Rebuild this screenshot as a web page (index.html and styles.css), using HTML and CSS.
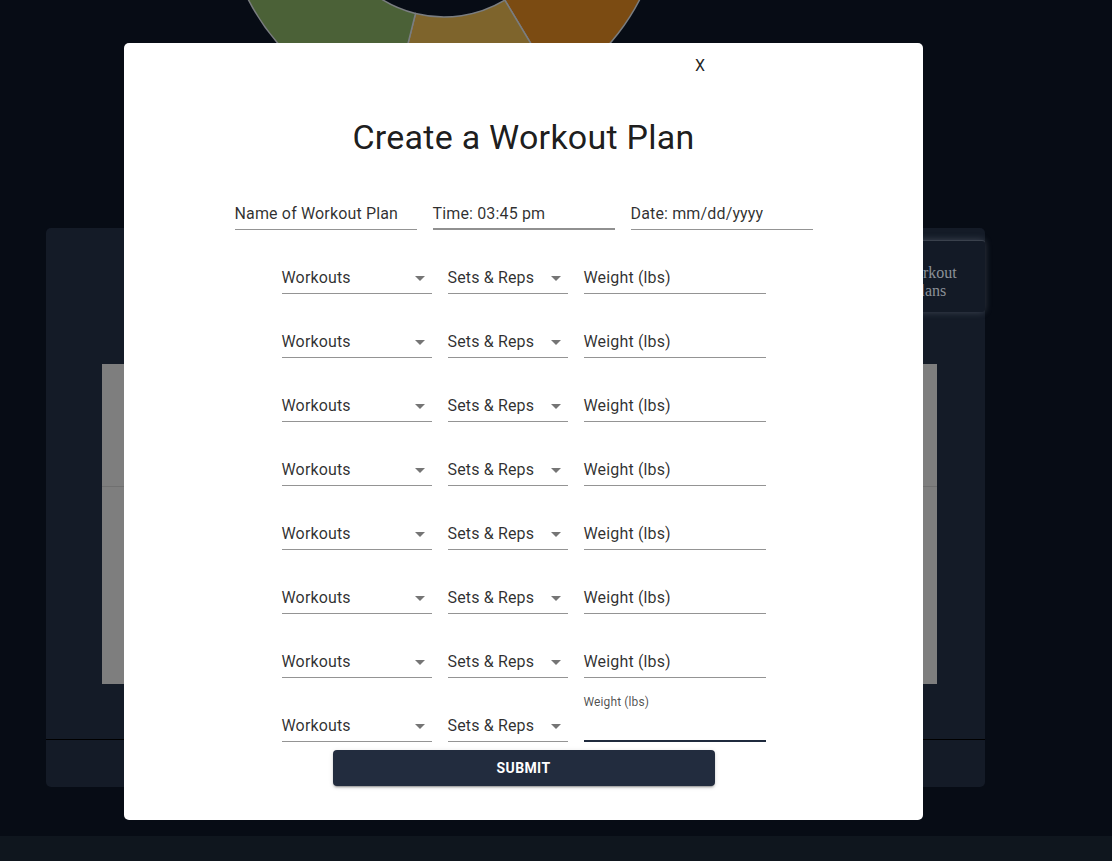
FILE: index.html
```html
<!DOCTYPE html>
<html lang="en">
<head>
<meta charset="utf-8">
<title>Create a Workout Plan</title>
<link rel="stylesheet" href="styles.css">
</head>
<body>
<div class="page">
  <div class="chart-area">
    <svg class="donut" width="1112" height="228" viewBox="0 0 1112 228">
      <path class="seg seg-orange" d="M 634.5 -211 A 220 220 0 0 1 557.3 87.6 L 504.8 0.1 A 118 118 0 0 0 546.2 -160 Z"/>
      <path class="seg seg-gold" d="M 557.3 87.6 A 220 220 0 0 1 390.8 112.5 L 415.5 13.5 A 118 118 0 0 0 504.8 0.1 Z"/>
      <path class="seg seg-green" d="M 390.8 112.5 A 220 220 0 0 1 253.5 -211 L 341.8 -160 A 118 118 0 0 0 415.5 13.5 Z"/>
    </svg>
  </div>
  <section class="card">
    <div class="card-head">
      <button class="plans-btn">Workout<br>Plans</button>
    </div>
    <div class="grey-panel">
      <div class="grey-top"></div>
      <div class="grey-bottom"></div>
    </div>
    <div class="card-foot"></div>
  </section>
  <div class="footer-band"></div>
</div>

<div class="modal">
  <div class="close-row"><span class="close">X</span></div>
  <h1 class="title">Create a Workout Plan</h1>
  <form class="plan-form">
    <div class="top-row">
      <div class="field w182"><span class="value">Name of Workout Plan</span></div>
      <div class="field w182 hovered"><span class="value">Time: 03:45 pm</span></div>
      <div class="field w182"><span class="value">Date: mm/dd/yyyy</span></div>
    </div>

    <div class="ex-row">
      <div class="ctl"><div class="field select w150"><span class="value">Workouts</span><svg class="arrow" viewBox="0 0 24 24"><path d="M7 10l5 5 5-5z"/></svg></div></div>
      <div class="ctl"><div class="field select w120"><span class="value">Sets &amp; Reps</span><svg class="arrow" viewBox="0 0 24 24"><path d="M7 10l5 5 5-5z"/></svg></div></div>
      <div class="ctl"><div class="field w182"><span class="value">Weight (lbs)</span></div></div>
    </div>
    <div class="ex-row">
      <div class="ctl"><div class="field select w150"><span class="value">Workouts</span><svg class="arrow" viewBox="0 0 24 24"><path d="M7 10l5 5 5-5z"/></svg></div></div>
      <div class="ctl"><div class="field select w120"><span class="value">Sets &amp; Reps</span><svg class="arrow" viewBox="0 0 24 24"><path d="M7 10l5 5 5-5z"/></svg></div></div>
      <div class="ctl"><div class="field w182"><span class="value">Weight (lbs)</span></div></div>
    </div>
    <div class="ex-row">
      <div class="ctl"><div class="field select w150"><span class="value">Workouts</span><svg class="arrow" viewBox="0 0 24 24"><path d="M7 10l5 5 5-5z"/></svg></div></div>
      <div class="ctl"><div class="field select w120"><span class="value">Sets &amp; Reps</span><svg class="arrow" viewBox="0 0 24 24"><path d="M7 10l5 5 5-5z"/></svg></div></div>
      <div class="ctl"><div class="field w182"><span class="value">Weight (lbs)</span></div></div>
    </div>
    <div class="ex-row">
      <div class="ctl"><div class="field select w150"><span class="value">Workouts</span><svg class="arrow" viewBox="0 0 24 24"><path d="M7 10l5 5 5-5z"/></svg></div></div>
      <div class="ctl"><div class="field select w120"><span class="value">Sets &amp; Reps</span><svg class="arrow" viewBox="0 0 24 24"><path d="M7 10l5 5 5-5z"/></svg></div></div>
      <div class="ctl"><div class="field w182"><span class="value">Weight (lbs)</span></div></div>
    </div>
    <div class="ex-row">
      <div class="ctl"><div class="field select w150"><span class="value">Workouts</span><svg class="arrow" viewBox="0 0 24 24"><path d="M7 10l5 5 5-5z"/></svg></div></div>
      <div class="ctl"><div class="field select w120"><span class="value">Sets &amp; Reps</span><svg class="arrow" viewBox="0 0 24 24"><path d="M7 10l5 5 5-5z"/></svg></div></div>
      <div class="ctl"><div class="field w182"><span class="value">Weight (lbs)</span></div></div>
    </div>
    <div class="ex-row">
      <div class="ctl"><div class="field select w150"><span class="value">Workouts</span><svg class="arrow" viewBox="0 0 24 24"><path d="M7 10l5 5 5-5z"/></svg></div></div>
      <div class="ctl"><div class="field select w120"><span class="value">Sets &amp; Reps</span><svg class="arrow" viewBox="0 0 24 24"><path d="M7 10l5 5 5-5z"/></svg></div></div>
      <div class="ctl"><div class="field w182"><span class="value">Weight (lbs)</span></div></div>
    </div>
    <div class="ex-row">
      <div class="ctl"><div class="field select w150"><span class="value">Workouts</span><svg class="arrow" viewBox="0 0 24 24"><path d="M7 10l5 5 5-5z"/></svg></div></div>
      <div class="ctl"><div class="field select w120"><span class="value">Sets &amp; Reps</span><svg class="arrow" viewBox="0 0 24 24"><path d="M7 10l5 5 5-5z"/></svg></div></div>
      <div class="ctl"><div class="field w182"><span class="value">Weight (lbs)</span></div></div>
    </div>
    <div class="ex-row">
      <div class="ctl"><div class="field select w150"><span class="value">Workouts</span><svg class="arrow" viewBox="0 0 24 24"><path d="M7 10l5 5 5-5z"/></svg></div></div>
      <div class="ctl"><div class="field select w120"><span class="value">Sets &amp; Reps</span><svg class="arrow" viewBox="0 0 24 24"><path d="M7 10l5 5 5-5z"/></svg></div></div>
      <div class="ctl focused"><span class="small-label">Weight (lbs)</span><div class="field w182"><span class="value"></span></div></div>
    </div>

    <div class="submit-row">
      <button type="button" class="submit">SUBMIT</button>
    </div>
  </form>
</div>
</body>
</html>
```

FILE: styles.css
```css
* { box-sizing: border-box; }

html, body {
  margin: 0;
  padding: 0;
}

body {
  background: #070c15;
  font-family: Roboto, "Liberation Sans", Arial, sans-serif;
  width: 1112px;
  height: 861px;
  overflow: hidden;
}

.page {
  width: 1112px;
  height: 861px;
}

.chart-area {
  height: 228px;
}

.donut {
  display: block;
}

.seg {
  stroke: #7a7d80;
  stroke-width: 1.5;
}
.seg-orange { fill: #7b4b12; }
.seg-gold { fill: #7e642c; }
.seg-green { fill: #4b6137; }

.card {
  margin-left: 46px;
  width: 939px;
  height: 559px;
  background: #141b27;
  border-radius: 5px;
  display: flex;
  flex-direction: column;
}

.card-head {
  display: flex;
  justify-content: flex-end;
  padding-top: 12px;
  height: 80px;
}

.plans-btn {
  width: 112px;
  height: 72px;
  background: #131a26;
  border: none;
  border-top: 1px solid #3a414c;
  border-radius: 3px;
  box-shadow: 0 0 7px rgba(170, 180, 195, 0.28);
  color: #8c9198;
  font-family: "Liberation Serif", "Times New Roman", serif;
  font-size: 16px;
  line-height: 18px;
  padding: 10px 0 0 0;
  text-align: center;
}

.grey-panel {
  margin-top: 56px;
  margin-left: 56px;
  width: 835px;
  height: 320px;
  background: #7e7e7e;
  display: flex;
  flex-direction: column;
}

.grey-top {
  height: 123px;
  border-bottom: 1px solid #707070;
}

.grey-bottom {
  flex: 1;
}

.card-foot {
  margin-top: auto;
  height: 48px;
  border-top: 1px solid #000000;
}

.footer-band {
  margin-top: 49px;
  height: 25px;
  background: #0f161e;
}

/* Modal overlay */
.modal {
  position: fixed;
  left: 124px;
  top: 43px;
  width: 799px;
  height: 777px;
  background: #ffffff;
  border-radius: 5px;
  padding-top: 11px;
  display: flex;
  flex-direction: column;
  align-items: center;
}

.close-row {
  width: 100%;
  display: flex;
  justify-content: flex-end;
  padding-right: 218px;
  height: 24px;
  line-height: 24px;
}

.close {
  font-size: 16px;
  color: rgba(0, 0, 0, 0.87);
}

.title {
  margin: 38px 0 0 0;
  font-size: 34px;
  font-weight: 400;
  line-height: 42px;
  letter-spacing: 0.00735em;
  color: rgba(0, 0, 0, 0.9);
  text-align: center;
}

.plan-form {
  margin-top: 40px;
  display: flex;
  flex-direction: column;
  align-items: center;
}

.top-row {
  display: flex;
  gap: 16px;
}

.ex-row {
  display: flex;
  gap: 16px;
  margin-top: 16px;
}

.ctl {
  position: relative;
  padding-top: 16px;
}

.field {
  position: relative;
  height: 32px;
  padding: 4px 0 5px;
  border-bottom: 1px solid rgba(0, 0, 0, 0.42);
  font-size: 16px;
  line-height: 23px;
  color: rgba(0, 0, 0, 0.82);
  letter-spacing: 0.00938em;
}

.field.hovered {
  border-bottom: 2px solid #909090;
}

.w182 { width: 182px; }
.w150 { width: 150px; }
.w120 { width: 120px; }

.value {
  display: block;
  white-space: nowrap;
  height: 23px;
}

.arrow {
  position: absolute;
  right: 0;
  top: 4px;
  width: 24px;
  height: 24px;
  fill: rgba(0, 0, 0, 0.54);
}

.focused .field {
  border-bottom: 2px solid #1f2a3d;
}

.small-label {
  position: absolute;
  left: 0;
  top: 0;
  font-size: 12px;
  line-height: 16px;
  color: rgba(0, 0, 0, 0.7);
  letter-spacing: 0.00938em;
}

.submit-row {
  margin-top: 8px;
}

.submit {
  width: 382px;
  height: 36px;
  background: #222c3e;
  color: #ffffff;
  border: none;
  border-radius: 4px;
  font-family: Roboto, "Liberation Sans", Arial, sans-serif;
  font-size: 14px;
  font-weight: 700;
  letter-spacing: 0.02857em;
  padding: 0 0 1px 0;
  box-shadow: 0 3px 1px -2px rgba(0,0,0,0.2), 0 2px 2px 0 rgba(0,0,0,0.14), 0 1px 5px 0 rgba(0,0,0,0.12);
}
```
